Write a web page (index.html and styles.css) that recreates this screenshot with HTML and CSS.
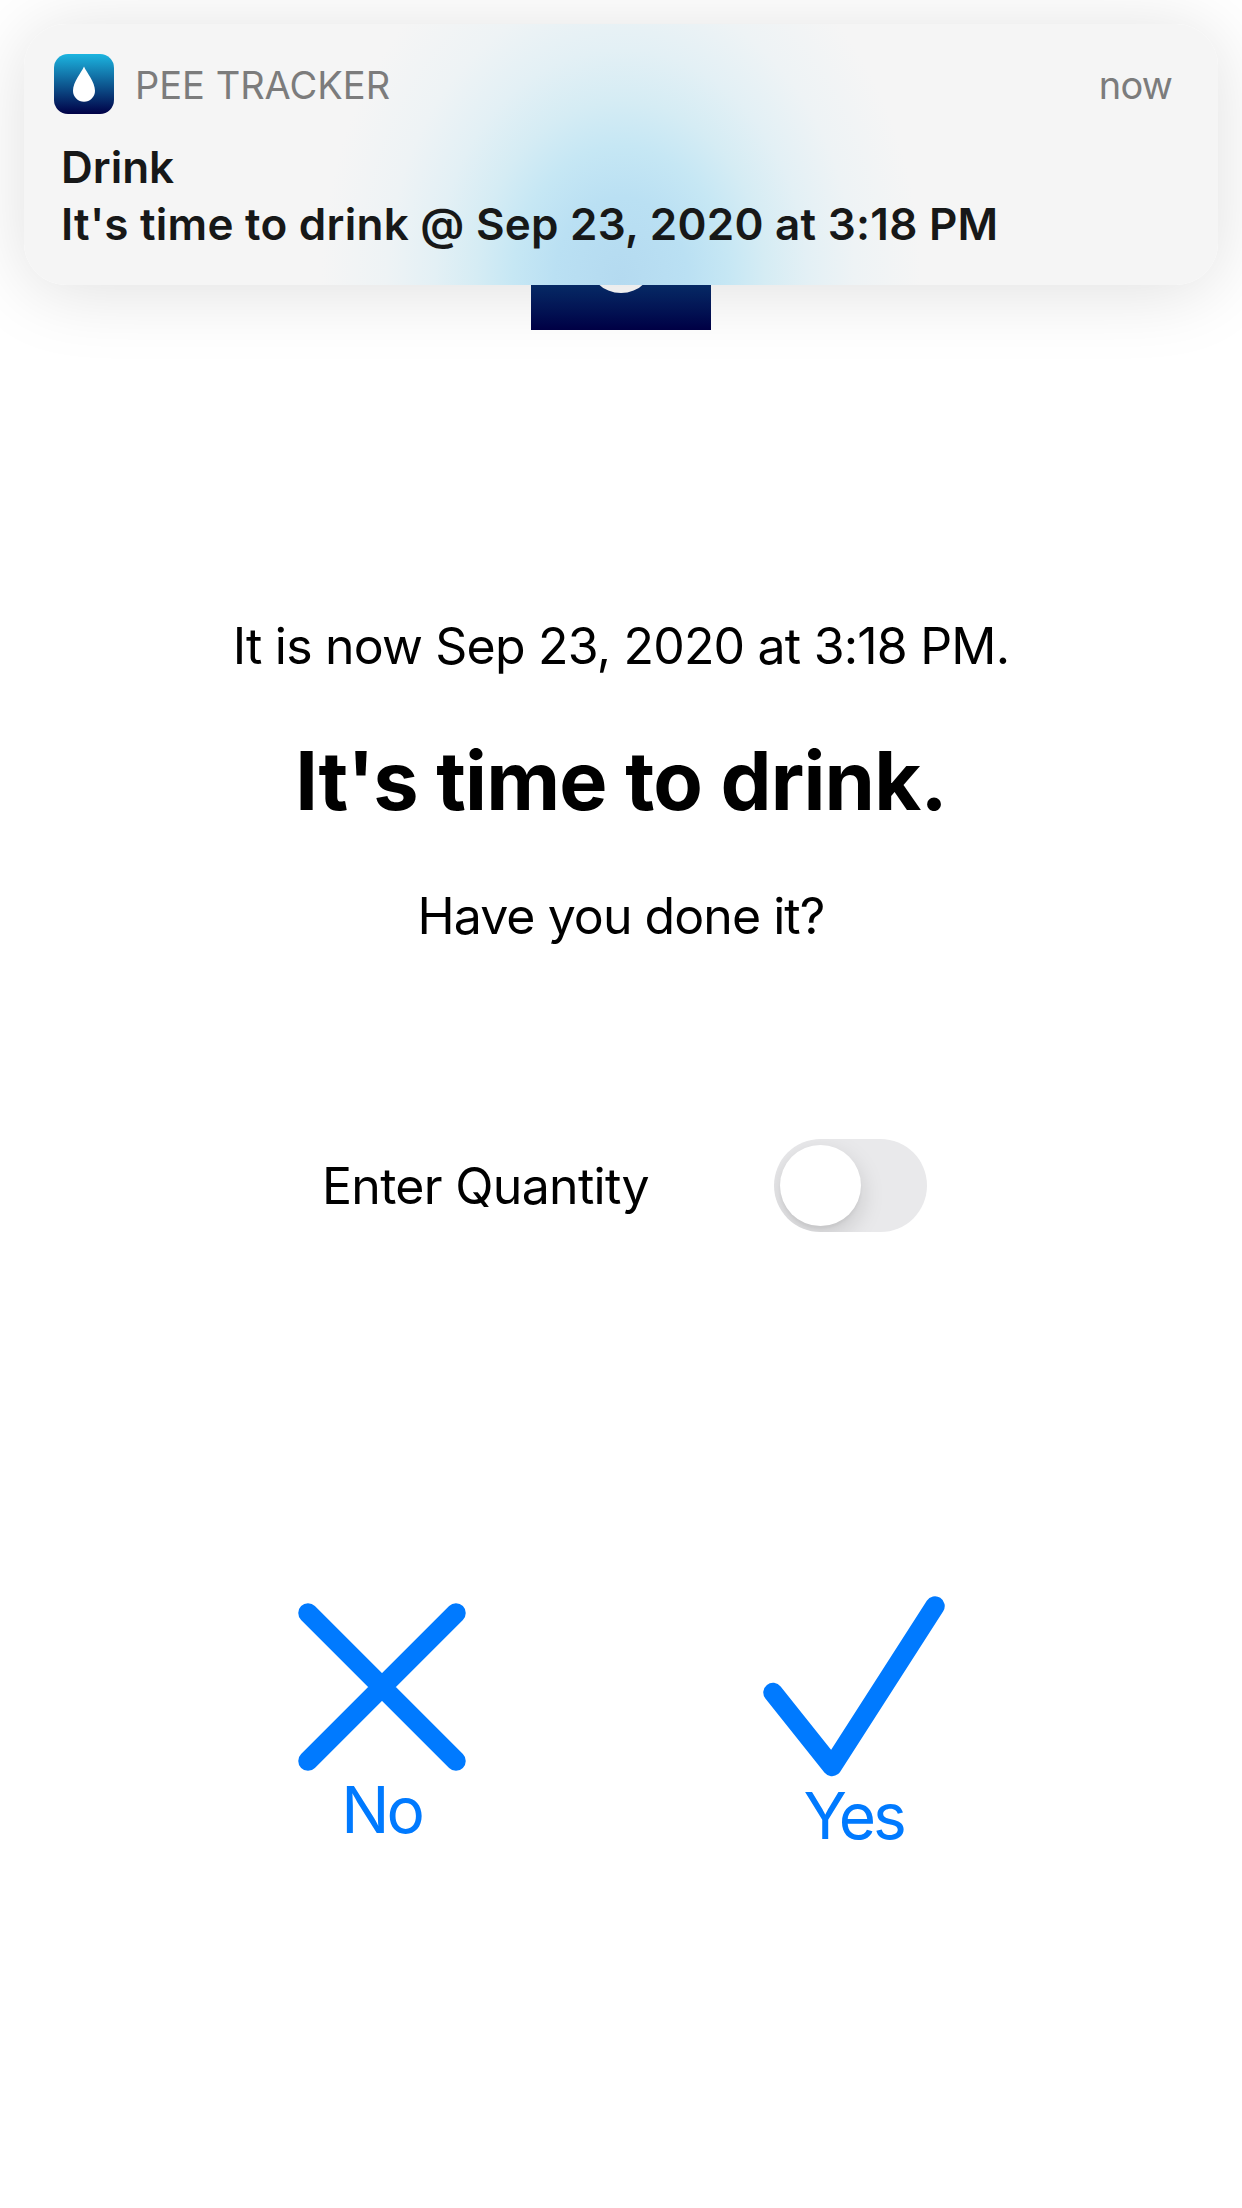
FILE: index.html
```html
<!DOCTYPE html>
<html lang="en">
<head>
  <meta charset="UTF-8" />
  <meta name="viewport" content="width=device-width, initial-scale=1" />
  <title>Pee Tracker</title>
  <link rel="stylesheet" href="styles.css">
</head>
<body>
  <!-- Notification banner, floats over the page -->
  <div class="banner">
    <div class="banner-header">
      <svg class="app-icon" viewBox="0 0 60 60">
        <defs>
          <linearGradient id="iconFill" x1="0" y1="0" x2="0" y2="1">
            <stop offset="0" stop-color="#1cb5e0" />
            <stop offset="1" stop-color="#000046" />
          </linearGradient>
        </defs>
        <rect width="60" height="60" rx="14" fill="url(#iconFill)" />
        <path d="M30 12.5C32.5 18.5 41 28 41 36.7A11 11 0 0 1 19 36.7C19 28 27.5 18.5 30 12.5Z" fill="#fff" />
      </svg>
      <span class="app-name">PEE TRACKER</span>
      <span class="banner-time">now</span>
    </div>
    <div class="banner-title">Drink</div>
    <div class="banner-message">It's time to drink @ Sep 23, 2020 at 3:18 PM</div>
  </div>

  <main class="container">
    <svg class="logo" viewBox="0 0 60 60">
      <rect width="60" height="60" fill="url(#iconFill)" />
      <path d="M30 12.5C32.5 18.5 41 28 41 36.7A11 11 0 0 1 19 36.7C19 28 27.5 18.5 30 12.5Z" fill="#fff" />
    </svg>

    <p class="date">It is now Sep 23, 2020 at 3:18 PM.</p>
    <h1>It's time to drink.</h1>
    <p class="question">Have you done it?</p>

    <div class="quantity">
      <span>Enter Quantity</span>
      <div class="switch" role="switch" aria-checked="false">
        <div class="knob"></div>
      </div>
    </div>

    <div class="actions">
      <div class="action action-no">
        <svg width="168" height="168" viewBox="0 0 168 168">
          <path d="M10 10L158 158M158 10L10 158" />
        </svg>
        <span>No</span>
      </div>
      <div class="action action-yes">
        <svg width="182" height="181" viewBox="0 0 182 181">
          <path d="M10 96.5L69 170.5L172 10" />
        </svg>
        <span>Yes</span>
      </div>
    </div>
  </main>
</body>
</html>
```

FILE: styles.css
```css
body {
  font-family: Inter, "Liberation Sans", sans-serif;
  background-color: #fff;
  color: #000;
  margin: 0;
  overflow: hidden;
}
/* Notification banner */
.banner {
  position: absolute;
  top: 24px;
  left: 24px;
  right: 24px;
  height: 261px;
  box-sizing: border-box;
  padding: 30px;
  border-radius: 42px;
  /* glow of the logo behind the banner */
  background: radial-gradient(ellipse 300px 370px at 597px 255px, #b4daf0 0%, #bae0f3 22%, #c6e7f4 36%, #d5ecf4 48%, #e3f0f5 62%, #eef3f5 78%, #f5f5f5 100%);
  box-shadow: 0 6px 75px rgba(0, 0, 0, 0.13);
  color: #171818;
}
.banner-header {
  display: flex;
  align-items: center;
  height: 60px;
  margin-bottom: 24.5px;
  font-size: 38px;
  line-height: 60px;
  color: #7c7c7c;
}
.app-icon {
  width: 60px;
  height: 60px;
}
.app-name,
.banner-time {
  padding-top: 2px;
}
.app-name {
  margin-left: 21px;
}
.banner-time {
  margin-left: auto;
  margin-right: 16px;
  letter-spacing: -0.8px;
}
.banner-title,
.banner-message {
  margin-left: 7px;
  font-size: 44px;
  font-weight: 600;
  line-height: 57px;
  white-space: nowrap;
}
.banner-message {
  letter-spacing: 0.26px;
}
/* Page */
.container {
  display: flex;
  flex-direction: column;
  align-items: center;
  height: 2208px;
  box-sizing: border-box;
  padding-top: 150px;
}
.logo {
  width: 180px;
  height: 180px;
}
p,
.quantity {
  margin: 0;
  font-size: 50px;
  line-height: 60px;
}
.date {
  margin-top: 286px;
  letter-spacing: -0.81px;
}
h1 {
  margin: 57px 0 57px;
  font-size: 81px;
  line-height: 96px;
  letter-spacing: -0.81px;
}
.question {
  letter-spacing: -0.95px;
}
/* Quantity switch */
.quantity {
  display: flex;
  align-items: center;
  justify-content: space-between;
  width: 605px;
  margin-top: 193px;
  margin-left: 7px;
  letter-spacing: -0.7px;
}
.switch {
  width: 153px;
  height: 93px;
  box-sizing: border-box;
  padding: 6px;
  border-radius: 47px;
  background: #e9e9eb;
  overflow: hidden;
}
.knob {
  width: 81px;
  height: 81px;
  border-radius: 50%;
  background: #fff;
  box-shadow: 0 9px 24px rgba(0, 0, 0, 0.15), 0 3px 3px rgba(0, 0, 0, 0.04);
}
/* No / Yes buttons */
.actions {
  display: flex;
  gap: 297px;
  margin-top: 363.5px;
}
.action {
  display: flex;
  flex-direction: column;
  align-items: center;
  color: #007aff;
  font-size: 64px;
  line-height: 78px;
}
.action-no {
  padding-top: 7px;
  letter-spacing: -3px;
}
.action-yes {
  letter-spacing: -3.2px;
}
.action path {
  fill: none;
  stroke: #007aff;
  stroke-width: 19.5;
  stroke-linecap: round;
  stroke-linejoin: round;
}
```
